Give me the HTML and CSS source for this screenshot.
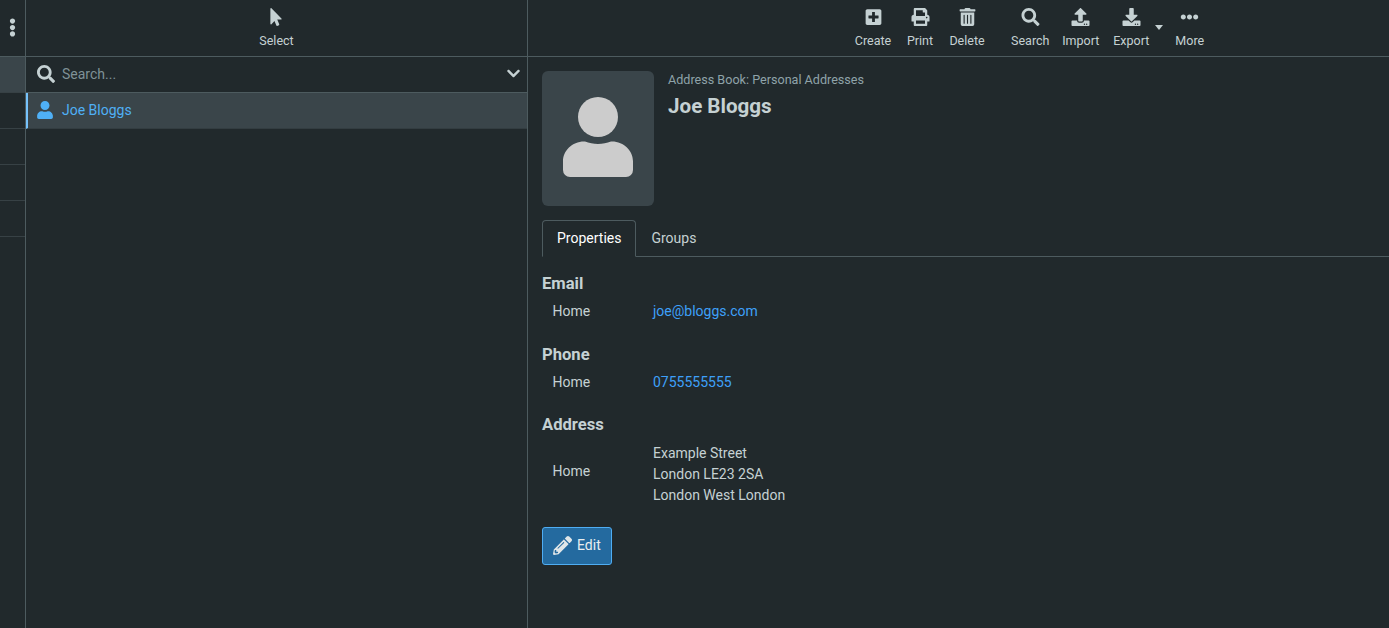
FILE: index.html
```html
<!DOCTYPE html>
<html lang="en">
<head>
<meta charset="utf-8">
<title>Contacts</title>
<link rel="stylesheet" href="styles.css">
</head>
<body>
<div class="app">
  <nav class="nav">
    <div class="nav-head">
      <svg class="ic-dots" viewBox="0 0 192 512"><path d="M96 184c39.8 0 72 32.2 72 72s-32.2 72-72 72-72-32.2-72-72 32.2-72 72-72zM24 80c0 39.8 32.2 72 72 72s72-32.2 72-72S135.8 8 96 8 24 40.2 24 80zm0 352c0 39.8 32.2 72 72 72s72-32.2 72-72-32.2-72-72-72-72 32.2-72 72z"/></svg>
    </div>
    <div class="nav-row nav-row-on"></div>
    <div class="nav-row"></div>
    <div class="nav-row"></div>
    <div class="nav-row"></div>
    <div class="nav-row"></div>
  </nav>

  <section class="list">
    <div class="list-head">
      <a class="tool">
        <svg class="ic ic-pointer" viewBox="0 0 320 512"><path d="M302.189 329.126H196.105l55.831 135.993c3.889 9.428-.555 19.999-9.444 23.999l-49.165 21.427c-9.165 4-19.443-.571-23.332-9.714l-53.053-129.136-86.664 89.138C18.729 472.71 0 463.554 0 447.977V18.299C0 1.899 19.921-6.096 30.277 5.443l284.412 292.542c11.472 11.179 3.007 31.141-12.5 31.141z"/></svg>
        <span>Select</span>
      </a>
    </div>
    <div class="searchbar">
      <svg class="ic-search" viewBox="0 0 512 512"><path d="M505 442.7L405.3 343c-4.5-4.5-10.6-7-17-7H372c27.6-35.3 44-79.7 44-128C416 93.1 322.9 0 208 0S0 93.1 0 208s93.1 208 208 208c48.3 0 92.7-16.4 128-44v16.3c0 6.4 2.5 12.5 7 17l99.7 99.7c9.4 9.4 24.6 9.4 33.9 0l28.3-28.3c9.4-9.4 9.4-24.6.1-34zM208 336c-70.7 0-128-57.2-128-128 0-70.7 57.2-128 128-128 70.7 0 128 57.2 128 128 0 70.7-57.2 128-128 128z"/></svg>
      <span class="placeholder">Search...</span>
      <svg class="ic-chevron" viewBox="0 0 448 512"><path d="M207.029 381.476L12.686 187.132c-9.373-9.373-9.373-24.569 0-33.941l22.667-22.667c9.357-9.357 24.522-9.375 33.901-.04L224 284.505l154.745-154.021c9.379-9.335 24.544-9.317 33.901.04l22.667 22.667c9.373 9.373 9.373 24.569 0 33.941L240.971 381.476c-9.373 9.372-24.569 9.372-33.942 0z"/></svg>
    </div>
    <div class="contact">
      <svg class="ic-user" viewBox="0 0 448 512"><path d="M224 256c70.7 0 128-57.3 128-128S294.7 0 224 0 96 57.3 96 128s57.3 128 128 128zm89.6 32h-16.7c-22.2 10.2-46.9 16-72.9 16s-50.6-5.8-72.9-16h-16.7C60.2 288 0 348.2 0 422.4V464c0 26.5 21.5 48 48 48h352c26.5 0 48-21.5 48-48v-41.6c0-74.2-60.2-134.4-134.4-134.4z"/></svg>
      <span>Joe Bloggs</span>
    </div>
  </section>

  <main class="detail">
    <div class="toolbar">
      <a class="tool tool-w47">
        <svg class="ic" viewBox="0 0 448 512"><path d="M400 32H48C21.5 32 0 53.5 0 80v352c0 26.5 21.5 48 48 48h352c26.5 0 48-21.5 48-48V80c0-26.5-21.5-48-48-48zm-32 252c0 6.6-5.4 12-12 12h-92v92c0 6.6-5.4 12-12 12h-56c-6.6 0-12-5.4-12-12v-92H92c-6.6 0-12-5.4-12-12v-56c0-6.6 5.4-12 12-12h92v-92c0-6.6 5.4-12 12-12h56c6.6 0 12 5.4 12 12v92h92c6.6 0 12 5.4 12 12v56z"/></svg>
        <span>Create</span>
      </a>
      <a class="tool tool-w47">
        <svg class="ic" viewBox="0 0 512 512"><path d="M448 192V77.25c0-8.49-3.37-16.62-9.37-22.63L393.37 9.37c-6-6-14.14-9.37-22.63-9.37H96C78.33 0 64 14.33 64 32v160c-35.35 0-64 28.65-64 64v112c0 8.84 7.16 16 16 16h48v96c0 17.67 14.33 32 32 32h320c17.67 0 32-14.33 32-32v-96h48c8.84 0 16-7.16 16-16V256c0-35.35-28.65-64-64-64zm-64 256H128v-96h256v96zm0-224H128V64h192v48c0 8.84 7.16 16 16 16h48v96zm48 72c-13.25 0-24-10.75-24-24 0-13.26 10.75-24 24-24s24 10.74 24 24c0 13.25-10.75 24-24 24z"/></svg>
        <span>Print</span>
      </a>
      <a class="tool tool-w47">
        <svg class="ic" viewBox="0 0 448 512"><path d="M32 464a48 48 0 0 0 48 48h288a48 48 0 0 0 48-48V128H32zm272-256a16 16 0 0 1 32 0v224a16 16 0 0 1-32 0zm-96 0a16 16 0 0 1 32 0v224a16 16 0 0 1-32 0zm-96 0a16 16 0 0 1 32 0v224a16 16 0 0 1-32 0zM432 32H312l-9.4-18.7A24 24 0 0 0 281.1 0H166.8a23.72 23.72 0 0 0-21.4 13.3L136 32H16A16 16 0 0 0 0 48v32a16 16 0 0 0 16 16h416a16 16 0 0 0 16-16V48a16 16 0 0 0-16-16z"/></svg>
        <span>Delete</span>
      </a>
      <a class="tool tool-w51 tool-gap">
        <svg class="ic" viewBox="0 0 512 512"><path d="M505 442.7L405.3 343c-4.5-4.5-10.6-7-17-7H372c27.6-35.3 44-79.7 44-128C416 93.1 322.9 0 208 0S0 93.1 0 208s93.1 208 208 208c48.3 0 92.7-16.4 128-44v16.3c0 6.4 2.5 12.5 7 17l99.7 99.7c9.4 9.4 24.6 9.4 33.9 0l28.3-28.3c9.4-9.4 9.4-24.6.1-34zM208 336c-70.7 0-128-57.2-128-128 0-70.7 57.2-128 128-128 70.7 0 128 57.2 128 128 0 70.7-57.2 128-128 128z"/></svg>
        <span>Search</span>
      </a>
      <a class="tool tool-w51">
        <svg class="ic" viewBox="0 0 512 512"><path d="M296 384h-80c-13.3 0-24-10.7-24-24V192h-87.7c-17.8 0-26.7-21.5-14.1-34.1L242.3 5.7c7.5-7.5 19.8-7.5 27.3 0l152.2 152.2c12.6 12.6 3.7 34.1-14.1 34.1H320v168c0 13.3-10.7 24-24 24zm216-8v112c0 13.3-10.7 24-24 24H24c-13.3 0-24-10.7-24-24V376c0-13.3 10.7-24 24-24h136v8c0 30.9 25.1 56 56 56h80c30.9 0 56-25.1 56-56v-8h136c13.3 0 24 10.7 24 24zm-124 88c0-11-9-20-20-20s-20 9-20 20 9 20 20 20 20-9 20-20zm64 0c0-11-9-20-20-20s-20 9-20 20 9 20 20 20 20-9 20-20z"/></svg>
        <span>Import</span>
      </a>
      <a class="tool tool-w51">
        <svg class="ic" viewBox="0 0 512 512"><path d="M216 0h80c13.3 0 24 10.7 24 24v168h87.7c17.8 0 26.7 21.5 14.1 34.1L269.7 378.3c-7.5 7.5-19.8 7.5-27.3 0L90.1 226.1c-12.6-12.6-3.7-34.1 14.1-34.1H192V24c0-13.3 10.7-24 24-24zm296 376v112c0 13.3-10.7 24-24 24H24c-13.3 0-24-10.7-24-24V376c0-13.3 10.7-24 24-24h146.7l49 49c20.1 20.1 52.5 20.1 72.6 0l49-49H488c13.3 0 24 10.7 24 24zm-124 88c0-11-9-20-20-20s-20 9-20 20 9 20 20 20 20-9 20-20zm64 0c0-11-9-20-20-20s-20 9-20 20 9 20 20 20 20-9 20-20z"/></svg>
        <span>Export</span>
      </a>
      <i class="caret"></i>
      <a class="tool tool-w51">
        <svg class="ic" viewBox="0 0 512 512"><path d="M328 256c0 39.8-32.2 72-72 72s-72-32.2-72-72 32.2-72 72-72 72 32.2 72 72zm104-72c-39.8 0-72 32.2-72 72s32.2 72 72 72 72-32.2 72-72-32.2-72-72-72zm-352 0c-39.8 0-72 32.2-72 72s32.2 72 72 72 72-32.2 72-72-32.2-72-72-72z"/></svg>
        <span>More</span>
      </a>
    </div>

    <div class="card">
      <div class="head">
        <div class="avatar">
          <svg class="avatar-svg" viewBox="0 0 70 80"><circle cx="35" cy="20" r="20"/><path d="M22 44.5c4 1.5 8.5 2.5 13 2.5s9-1 13-2.5h1C61 44.5 70 54 70 64v9a7 7 0 0 1-7 7H7a7 7 0 0 1-7-7v-9C0 54 9 44.5 21 44.5z"/></svg>
        </div>
        <div class="names">
          <div class="book">Address Book: Personal Addresses</div>
          <h1 class="name">Joe Bloggs</h1>
        </div>
      </div>

      <div class="tabs">
        <a class="tab tab-on">Properties</a>
        <a class="tab">Groups</a>
      </div>

      <h2 class="sec sec-first">Email</h2>
      <div class="row"><span class="label">Home</span><a class="val link">joe@bloggs.com</a></div>

      <h2 class="sec">Phone</h2>
      <div class="row"><span class="label">Home</span><a class="val link">0755555555</a></div>

      <h2 class="sec">Address</h2>
      <div class="row row-addr"><span class="label">Home</span><div class="val">Example Street<br>London LE23 2SA<br>London West London</div></div>

      <button class="edit" type="button">
        <svg class="ic-pencil" viewBox="0 0 512 512"><path d="M497.9 142.1l-46.1 46.1c-4.7 4.7-12.3 4.7-17 0l-111-111c-4.7-4.7-4.7-12.3 0-17l46.1-46.1c18.7-18.7 49.1-18.7 67.9 0l60.1 60.1c18.8 18.7 18.8 49.1 0 67.9zM284.2 99.8L21.6 362.4.4 483.9c-2.9 16.4 11.4 30.6 27.8 27.8l121.5-21.3 262.6-262.6c4.7-4.7 4.7-12.3 0-17l-111-111c-4.8-4.7-12.4-4.7-17.1 0zM124.1 339.9c-5.5-5.5-5.5-14.3 0-19.8l154-154c5.5-5.5 14.3-5.5 19.8 0s5.5 14.3 0 19.8l-154 154c-5.5 5.5-14.3 5.5-19.8 0zM88 424h48v36.3l-64.5 11.3-31.1-31.1L51.7 376H88v48z"/></svg>
        <span>Edit</span>
      </button>
    </div>
  </main>
</div>
</body>
</html>
```

FILE: styles.css
```css
* { box-sizing: border-box; }
html, body { margin: 0; height: 100%; overflow: hidden; }
body { background: #21292c; color: #c5d1d3; font: 14px/20px Roboto, "Liberation Sans", sans-serif; }
.app { display: grid; grid-template-columns: 26px 502px 1fr; height: 628px; }

.nav { border-right: 1px solid #4d5b5f; }
.nav-head { height: 57px; border-bottom: 1px solid #4d5b5f; display: flex; align-items: center; justify-content: center; }
.ic-dots { width: 7px; height: 19px; fill: #c5d1d3; margin-top: -1px; }
.nav-row { height: 36px; border-bottom: 1px solid #374145; }
.nav-row-on { background: #3a454a; }

.list { border-right: 1px solid #4d5b5f; }
.list-head { height: 57px; border-bottom: 1px solid #4d5b5f; display: flex; justify-content: center; }
.tool { display: flex; flex-direction: column; align-items: center; height: 56px; padding-top: 8px; color: #c5d1d3; }
.tool span { font-size: 12.5px; line-height: 16px; margin-top: 7px; white-space: nowrap; }
.ic { height: 18px; width: 21px; fill: #c5d1d3; display: block; }
.ic-pointer { width: 14px; }

.searchbar { height: 36px; display: flex; align-items: center; padding: 0 7px 2px 11px; border-bottom: 1px solid #4d5b5f; }
.ic-search { width: 18px; height: 18px; fill: #c5d1d3; flex: none; }
.placeholder { flex: 1; margin-left: 7px; font-size: 14px; color: #7f9197; }
.ic-chevron { width: 13px; height: 15px; fill: #c5d1d3; flex: none; }
.contact { height: 36px; display: flex; align-items: center; padding: 0 0 2px 9px; background: #3a454a; border-left: 2px solid #76c2fb; border-bottom: 1px solid #333d41; color: #4fb0f6; font-size: 14px; }
.ic-user { width: 16px; height: 18px; fill: #4fb0f6; flex: none; margin-right: 9px; }

.detail { min-width: 0; }
.toolbar { height: 57px; border-bottom: 1px solid #4d5b5f; display: flex; padding-left: 321.5px; }
.tool-w47 { width: 47px; }
.tool-w51 { width: 50.5px; }
.tool-gap { margin-left: 14.5px; }
.caret { width: 0; height: 0; margin: 25px 2px 0 -2px; border: 4.5px solid transparent; border-top: 5px solid #c5d1d3; border-bottom: 0; }

.card { padding: 14px 14px 0; }
.head { display: flex; height: 149px; }
.avatar { width: 112px; height: 135px; background: #3a454a; border-radius: 6px; display: flex; align-items: center; justify-content: center; }
.avatar-svg { width: 70px; height: 80px; fill: #cccccc; margin-top: -3px; }
.names { margin-left: 14px; }
.book { color: #8fa3a9; line-height: 18px; font-size: 12.6px; }
.name { margin: 3px 0 0; font-size: 20.6px; font-weight: 700; line-height: 28px; }

.tabs { display: flex; height: 37px; border-bottom: 1px solid #4d5b5f; margin-right: -14px; }
.tab { padding: 0 15px; line-height: 36px; color: #c5d1d3; height: 37px; }
.tab-on { color: #fff; background: #21292c; border: 1px solid #4d5b5f; border-bottom-color: #21292c; border-radius: 4px 4px 0 0; padding: 0 14px; line-height: 34px; }

.sec { margin: 20.5px 0 0; font-size: 16.6px; font-weight: 700; line-height: 24px; }
.sec-first { margin-top: 15px; }
.row { display: flex; align-items: center; padding: 5px 0 0 10.5px; font-size: 14px; line-height: 21px; }
.row-addr { padding-top: 6px; }
.row-addr .label { margin-bottom: 6px; }
.label { width: 100.5px; flex: none; }
.link { color: #3ea0f9; }
.edit { display: flex; align-items: center; margin-top: 21px; width: 70px; height: 38px; padding: 0 0 2px 10px; background: #246a9f; border: 1px solid #4fadf3; border-radius: 3px; color: #e8eef0; font: 14px Roboto, sans-serif; }
.ic-pencil { width: 19px; height: 19px; fill: #e0e6e8; margin-right: 5px; flex: none; }
```
